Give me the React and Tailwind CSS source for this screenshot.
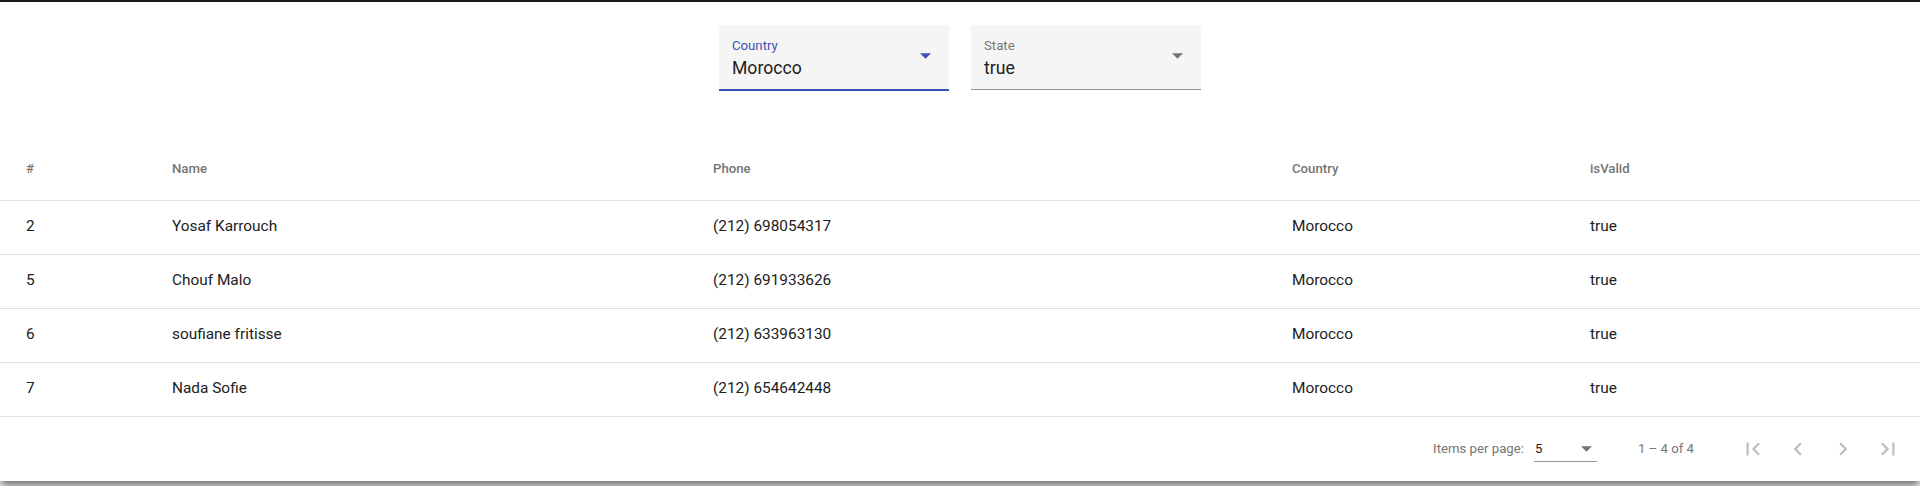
import React from "react";

const rows = [
  { id: 2, name: "Yosaf Karrouch", phone: "(212) 698054317", country: "Morocco", valid: "true" },
  { id: 5, name: "Chouf Malo", phone: "(212) 691933626", country: "Morocco", valid: "true" },
  { id: 6, name: "soufiane fritisse", phone: "(212) 633963130", country: "Morocco", valid: "true" },
  { id: 7, name: "Nada Sofie", phone: "(212) 654642448", country: "Morocco", valid: "true" },
];

const Caret = ({ color }) => (
  <svg width="11" height="6" viewBox="0 0 10 5" className="shrink-0">
    <path d="M0 0 L5 5 L10 0 Z" fill={color} />
  </svg>
);

const NavIcon = ({ d }) => (
  <button className="w-[45px] h-[45px] flex items-center justify-center">
    <svg width="26" height="26" viewBox="0 0 24 24">
      <path d={d} fill="#bdbdbd" />
    </svg>
  </button>
);

const SelectField = ({ label, value, focused }) => (
  <div
    className={`w-[230px] rounded-t-[4px] bg-[#f5f5f5] flex items-center justify-between pl-[13px] pr-[18px] ${
      focused ? "h-[66px] border-b-2 border-[#3f51b5]" : "h-[65px] border-b border-[#949494]"
    }`}
  >
    <div className="flex flex-col pt-[3px]">
      <span
        className={`text-[13.2px] leading-[16px] ${
          focused ? "text-[#3f51b5]" : "text-[#757575]"
        }`}
      >
        {label}
      </span>
      <span className="text-[17.6px] leading-[22px] mt-[3px] text-[#212121]">{value}</span>
    </div>
    <div className="pb-[2px]">
      <Caret color={focused ? "#3f51b5" : "#757575"} />
    </div>
  </div>
);

export default function App() {
  return (
    <div className="font-['Roboto','Liberation_Sans',sans-serif] min-h-[486px] bg-white">
      <div className="h-[2px] bg-[#1c1c1c]" />
      <div className="relative bg-white shadow-[0_5px_6px_-2px_rgba(0,0,0,0.35),0_8px_10px_1px_rgba(0,0,0,0.2),0_3px_14px_2px_rgba(0,0,0,0.14)]">
        <div className="flex items-start justify-center gap-[22px] pt-[23px] pb-[47px]">
          <SelectField label="Country" value="Morocco" focused />
          <SelectField label="State" value="true" />
        </div>

        <table className="w-full table-fixed border-collapse">
          <colgroup>
            <col className="w-[172px]" />
            <col className="w-[541px]" />
            <col className="w-[579px]" />
            <col className="w-[298px]" />
            <col />
          </colgroup>
          <thead>
            <tr className="h-[62px] border-b border-[#e0e0e0]">
              {["#", "Name", "Phone", "Country", "isValid"].map((h, i) => (
                <th
                  key={h}
                  className={`text-left align-middle text-[13.2px] font-medium text-[#757575] pt-[1px] ${
                    i === 0 ? "pl-[26px]" : ""
                  }`}
                >
                  {h}
                </th>
              ))}
            </tr>
          </thead>
          <tbody>
            {rows.map((r) => (
              <tr key={r.id} className="h-[54px] border-b border-[#e0e0e0] text-[15.4px] text-[#212121]">
                <td className="pl-[26px]">{r.id}</td>
                <td>{r.name}</td>
                <td>{r.phone}</td>
                <td>{r.country}</td>
                <td>{r.valid}</td>
              </tr>
            ))}
          </tbody>
        </table>

        <div className="h-[64px] flex items-center justify-end pr-[10px] text-[13.2px] text-[#757575]">
          <span>Items per page:</span>
          <div className="ml-[10px] w-[63px] h-[25px] mt-[2px] border-b border-[#949494] flex items-center justify-between pl-[1px] pr-[5px]">
            <span className="text-[#212121]">5</span>
            <Caret color="#757575" />
          </div>
          <span className="ml-[41px] mr-[36px]">1 – 4 of 4</span>
          <div className="flex items-center">
            <NavIcon d="M18.41 16.59L13.82 12l4.59-4.59L17 6l-6 6 6 6zM6 6h2v12H6z" />
            <NavIcon d="M15.41 7.41L14 6l-6 6 6 6 1.41-1.41L10.83 12z" />
            <NavIcon d="M10 6L8.59 7.41 13.17 12l-4.58 4.59L10 18l6-6z" />
            <NavIcon d="M5.59 7.41L10.18 12l-4.59 4.59L7 18l6-6-6-6zM16 6h2v12h-2z" />
          </div>
        </div>
      </div>
    </div>
  );
}
